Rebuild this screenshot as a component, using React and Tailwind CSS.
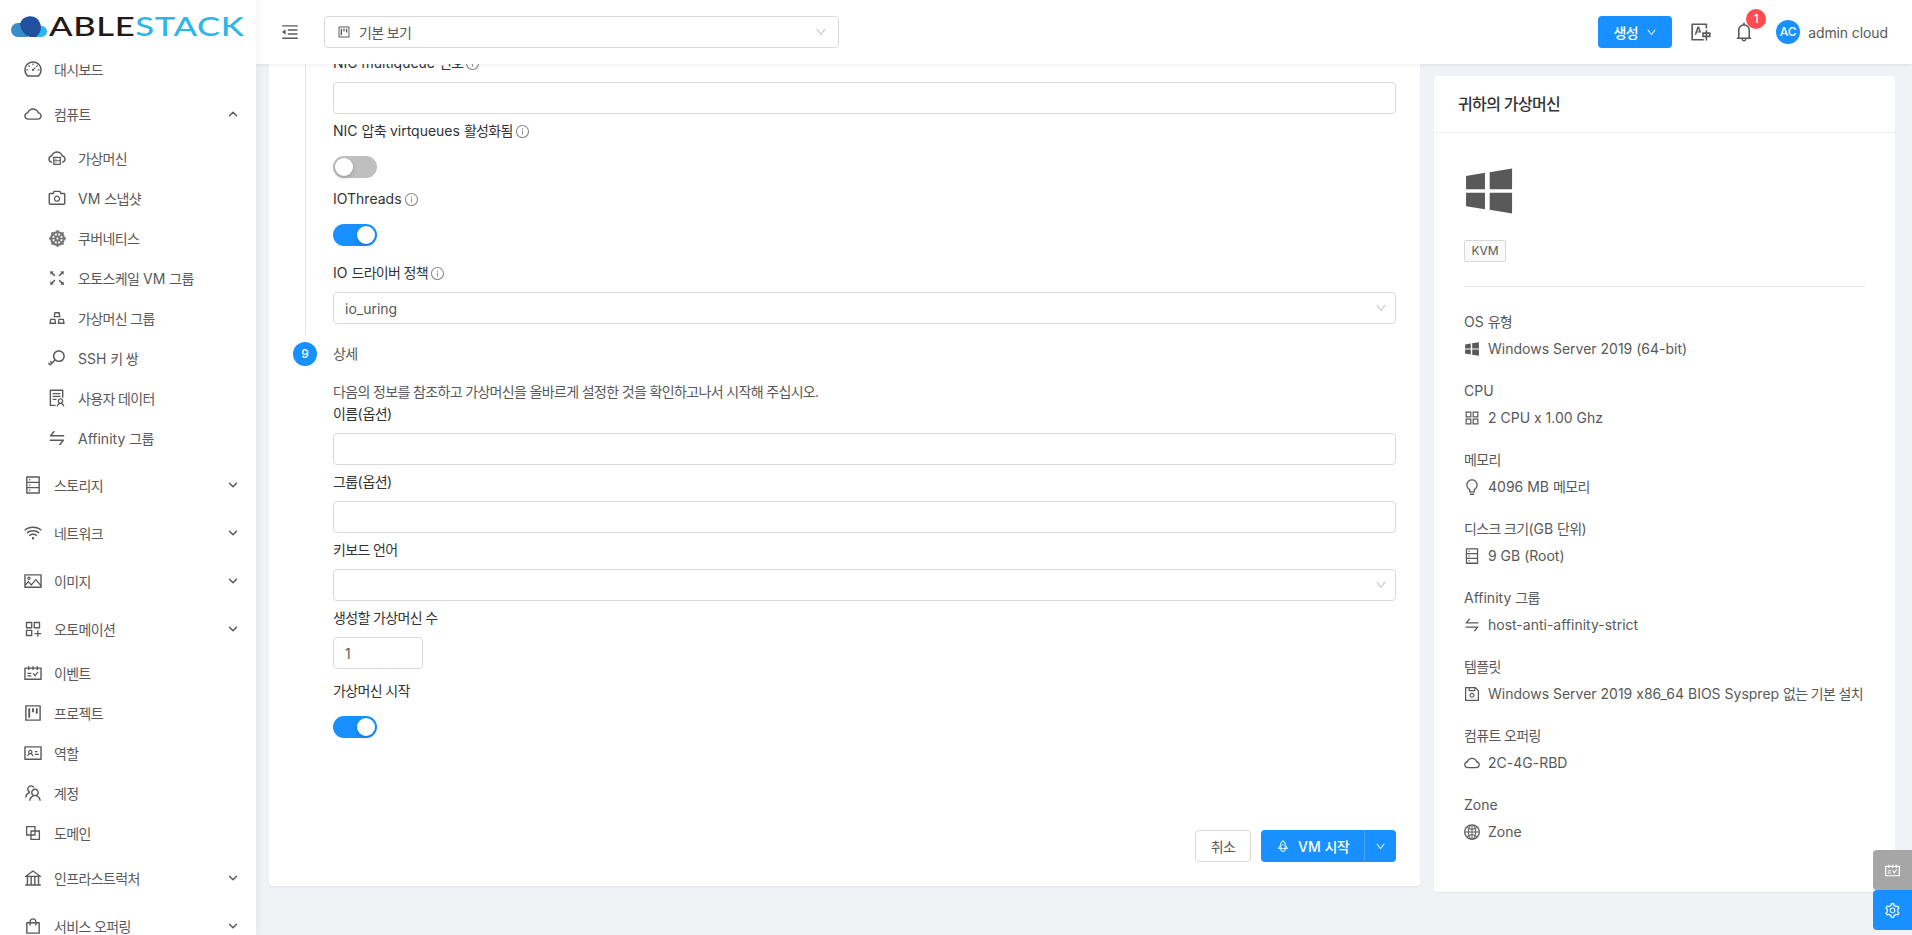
import {
  AiOutlineDashboard, AiOutlineCloud, AiOutlineCloudServer, AiOutlineCamera, AiOutlineFullscreen, AiOutlineGold,
  AiOutlineKey, AiOutlineSolution, AiOutlineSwap, AiOutlineDatabase, AiOutlineWifi, AiOutlinePicture,
  AiOutlineAppstoreAdd, AiOutlineSchedule, AiOutlineProject, AiOutlineIdcard, AiOutlineTeam, AiOutlineBlock,
  AiOutlineBank, AiOutlineShopping, AiOutlineMenuFold, AiOutlineDown, AiOutlineInfoCircle, AiFillWindows,
  AiOutlineAppstore, AiOutlineBulb, AiOutlineSave, AiOutlineGlobal, AiOutlineRocket, AiOutlineSetting,
  AiOutlineTranslation, AiOutlineBell,
} from 'react-icons/ai'
import { FaDharmachakra } from 'react-icons/fa'
import { ChevronDown, ChevronUp } from 'lucide-react'

const computeItems = [
  { label: '가상머신', icon: AiOutlineCloudServer },
  { label: 'VM 스냅샷', icon: AiOutlineCamera },
  { label: '쿠버네티스', icon: FaDharmachakra, size: 17, muted: true },
  { label: '오토스케일 VM 그룹', icon: AiOutlineFullscreen },
  { label: '가상머신 그룹', icon: AiOutlineGold },
  { label: 'SSH 키 쌍', icon: AiOutlineKey },
  { label: '사용자 데이터', icon: AiOutlineSolution },
  { label: 'Affinity 그룹', icon: AiOutlineSwap },
]

const lowerItems = [
  { label: '스토리지', icon: AiOutlineDatabase, sub: true },
  { label: '네트워크', icon: AiOutlineWifi, sub: true },
  { label: '이미지', icon: AiOutlinePicture, sub: true },
  { label: '오토메이션', icon: AiOutlineAppstoreAdd, sub: true, flip: true },
  { label: '이벤트', icon: AiOutlineSchedule },
  { label: '프로젝트', icon: AiOutlineProject },
  { label: '역할', icon: AiOutlineIdcard },
  { label: '계정', icon: AiOutlineTeam },
  { label: '도메인', icon: AiOutlineBlock },
  { label: '인프라스트럭처', icon: AiOutlineBank, sub: true, gap: true },
  { label: '서비스 오퍼링', icon: AiOutlineShopping, sub: true },
]

const summary = [
  { label: 'OS 유형', value: 'Windows Server 2019 (64-bit)', icon: AiFillWindows },
  { label: 'CPU', value: '2 CPU x 1.00 Ghz', icon: AiOutlineAppstore },
  { label: '메모리', value: '4096 MB 메모리', icon: AiOutlineBulb },
  { label: '디스크 크기(GB 단위)', value: '9 GB (Root)', icon: AiOutlineDatabase },
  { label: 'Affinity 그룹', value: 'host-anti-affinity-strict', icon: AiOutlineSwap },
  { label: '템플릿', value: 'Windows Server 2019 x86_64 BIOS Sysprep 없는 기본 설치', icon: AiOutlineSave },
  { label: '컴퓨트 오퍼링', value: '2C-4G-RBD', icon: AiOutlineCloud },
  { label: 'Zone', value: 'Zone', icon: AiOutlineGlobal },
]

// hangul in the reference runs narrower than Noto's, so tighten just those runs
function T({ children }) {
  return String(children).split(/([가-힣]+(?: [가-힣]+)*)/).map((part, i) =>
    /[가-힣]/.test(part)
      ? <span key={i} className="tracking-[-0.65px]">{part}</span>
      : part
  )
}

function Logo() {
  return (
    <div className="flex h-[49px] shrink-0 items-start pl-[11px] pt-[15px]">
      <svg width="37" height="22" viewBox="0 0 37 22" className="shrink-0">
        <path d="M7 22a7 7 0 0 1 0-14h10v14z" fill="#3b8ccb" />
        <path d="M30 22a5.5 5.5 0 0 0 1-11h-8v11z" fill="#2bb8e8" />
        <path d="M9 9a10.5 10.5 0 0 1 20-1c2 5 1 10-4 14h-6C13 20 10 15 9 9z" fill="#21509f" />
      </svg>
      <div className="ml-[1px] -mt-[2px] h-[26px] origin-left scale-x-[1.28] font-['Lato',sans-serif] text-[27px] leading-[26px] font-medium tracking-[0.5px] whitespace-nowrap">
        <span className="text-[#231815]">ABLE</span>
        <span className="text-[#2db7e4]">STACK</span>
      </div>
    </div>
  )
}

function MenuIcon({ item }) {
  const Icon = item.icon
  return (
    <span className={`flex w-5 shrink-0 justify-center ${item.muted ? 'text-[#737373]' : ''}`}>
      <Icon size={item.size || 20} className={item.flip ? '-scale-x-100' : ''} />
    </span>
  )
}

function MenuRow({ item, open }) {
  return (
    <div className={`flex shrink-0 items-center pl-[23px] pr-4 text-[14px] text-[#595959] ${item.sub ? 'h-12' : 'h-10'} ${item.gap ? 'mt-px' : ''}`}>
      <MenuIcon item={item} />
      <span className="ml-[11px] flex-1 whitespace-nowrap"><T>{item.label}</T></span>
      {item.sub && (open
        ? <ChevronUp size={14} strokeWidth={2.5} />
        : <ChevronDown size={14} strokeWidth={2.5} />)}
    </div>
  )
}

function Sidebar() {
  return (
    <aside className="z-20 flex h-full w-64 shrink-0 flex-col overflow-hidden bg-white shadow-[2px_0_8px_rgba(29,35,41,0.05)]">
      <Logo />
      <MenuRow item={{ label: '대시보드', icon: AiOutlineDashboard }} />
      <div className="mt-px shrink-0">
        <MenuRow item={{ label: '컴퓨트', icon: AiOutlineCloud, sub: true }} open />
      </div>
      {computeItems.map((item) => (
        <div key={item.label} className="flex h-10 shrink-0 items-center pl-[47px] text-[14px] text-[#595959]">
          <MenuIcon item={item} />
          <span className="ml-[11px] whitespace-nowrap"><T>{item.label}</T></span>
        </div>
      ))}
      <div className="h-[3px] shrink-0" />
      {lowerItems.map((item) => (
        <MenuRow key={item.label} item={item} />
      ))}
    </aside>
  )
}

function Header() {
  return (
    <header className="relative z-10 flex h-16 shrink-0 items-center bg-white pl-6 pr-6 text-[14px] shadow-[0_1px_4px_rgba(0,21,41,0.08)]">
      <AiOutlineMenuFold size={20} className="text-[#595959]" />
      <div className="ml-6 flex h-8 w-[515px] items-center rounded border border-[#d9d9d9] pl-3 pr-[11px] text-[#595959]">
        <AiOutlineProject size={14} />
        <span className="ml-2 flex-1"><T>기본 보기</T></span>
        <AiOutlineDown size={12} className="text-[#bfbfbf]" />
      </div>
      <div className="ml-auto flex items-center">
        <div className="flex h-8 w-[74px] items-center justify-center rounded bg-[#1890ff] font-medium text-white">
          <span><T>생성</T></span>
          <AiOutlineDown size={11} className="ml-2" />
        </div>
        <AiOutlineTranslation size={22} className="ml-[18px] text-[#595959]" />
        <div className="relative ml-[21px]">
          <AiOutlineBell size={22} className="text-[#595959]" />
          <span className="absolute -right-[11px] -top-[12px] flex h-5 w-5 items-center justify-center rounded-full bg-[#ff4d4f] text-[12px] font-medium text-white">1</span>
        </div>
        <div className="ml-[21px] flex h-6 w-6 items-center justify-center rounded-full bg-[#1890ff] text-[12px] font-medium text-white">AC</div>
        <span className="ml-2 tracking-[-0.1px] text-[#595959]">admin cloud</span>
      </div>
    </header>
  )
}

function Label({ children, info }) {
  return (
    <div className="flex h-[22px] items-center text-[14px] leading-[22px] text-[#333333]">
      <span><T>{children}</T></span>
      {info && <AiOutlineInfoCircle size={15} className="ml-[2px] text-[#8c8c8c]" />}
    </div>
  )
}

function Field({ label, info, value, select, narrow }) {
  return (
    <div className="mb-[6px]">
      <Label info={info}>{label}</Label>
      <div className={`mt-2 flex h-8 items-center rounded border border-[#d9d9d9] pl-[11px] pr-[8px] text-[14px] text-[#595959] ${narrow ? 'w-[90px]' : 'w-full'}`}>
        <span className="flex-1">{value}</span>
        {select && <AiOutlineDown size={12} className="text-[#bfbfbf]" />}
      </div>
    </div>
  )
}

function Toggle({ label, info, on, after }) {
  return (
    <div className={after}>
      <Label info={info}>{label}</Label>
      <div className={`mt-[14px] flex h-[22px] w-[44px] items-center rounded-full px-[2px] ${on ? 'justify-end bg-[#1890ff]' : 'bg-[#bfbfbf]'}`}>
        <div className="h-[18px] w-[18px] rounded-full bg-white shadow-[0_2px_4px_rgba(0,35,11,0.2)]" />
      </div>
    </div>
  )
}

function FormCard() {
  return (
    <section className="-mt-6 flex h-[834px] w-[1151px] shrink-0 flex-col rounded bg-white pl-6 pr-6 shadow-[0_1px_2px_rgba(0,0,0,0.06)]">
      <div className="flex">
        <div className="flex w-6 shrink-0 justify-center">
          <div className="w-px bg-[#e8e8e8]" />
        </div>
        <div className="ml-4 flex-1 pb-[6px]">
          <Field label="NIC multiqueue 번호" info />
          <Toggle label="NIC 압축 virtqueues 활성화됨" info after="mb-[10px]" />
          <Toggle label="IOThreads" info on after="mb-4" />
          <Field label="IO 드라이버 정책" info value="io_uring" select />
        </div>
      </div>
      <div className="flex pt-[6px]">
        <div className="flex h-6 w-6 shrink-0 items-center justify-center rounded-full bg-[#1890ff] text-[12px] font-medium text-white">9</div>
        <div className="ml-4 flex-1">
          <div className="h-6 text-[14px] leading-6 text-[#595959]"><T>상세</T></div>
          <div className="mt-[15px] h-[22px] text-[14px] leading-[22px] text-[#595959]">
            <T>다음의 정보를 참조하고 가상머신을 올바르게 설정한 것을 확인하고나서 시작해 주십시오.</T>
          </div>
          <Field label="이름(옵션)" />
          <Field label="그룹(옵션)" />
          <Field label="키보드 언어" select />
          <Field label="생성할 가상머신 수" value="1" narrow />
          <div className="mt-[11px]">
            <Toggle label="가상머신 시작" on />
          </div>
        </div>
      </div>
      <div className="mt-auto mb-6 flex justify-end text-[14px]">
        <div className="flex h-8 w-[56px] items-center justify-center rounded border border-[#d9d9d9] text-[#595959]"><T>취소</T></div>
        <div className="ml-[10px] flex h-8 w-[135px] items-center rounded bg-[#1890ff] font-medium text-white">
          <div className="flex flex-1 items-center justify-center">
            <AiOutlineRocket size={14} />
            <span className="ml-2"><T>VM 시작</T></span>
          </div>
          <div className="flex h-full w-8 items-center justify-center border-l border-[#46a6ff]">
            <AiOutlineDown size={11} />
          </div>
        </div>
      </div>
    </section>
  )
}

function SummaryCard() {
  return (
    <aside className="h-[816px] min-w-0 flex-1 rounded bg-white shadow-[0_1px_2px_rgba(0,0,0,0.06)]">
      <div className="flex h-[57px] items-center border-b border-[#f0f0f0] pl-6 text-[16px] font-medium text-[#333333]"><T>귀하의 가상머신</T></div>
      <div className="px-[30px] pt-[32px]">
        <AiFillWindows size={60} className="-ml-[5px] -my-1 text-[#595959]" />
        <div className="mt-[23px] flex h-[22px] w-[42px] items-center justify-center rounded-[2px] border border-[#d9d9d9] bg-[#fafafa] text-[12px] text-[#595959]">KVM</div>
        <div className="mt-6 h-px bg-[#e8e8e8]" />
        <div className="pt-6">
          {summary.map((row) => {
            const Icon = row.icon
            return (
              <div key={row.label} className="mb-5 text-[14px] leading-[22px] text-[#595959]">
                <div className="h-[22px]"><T>{row.label}</T></div>
                <div className="mt-[5px] flex h-[22px] items-center">
                  <Icon size={18} className="-ml-px shrink-0" />
                  <span className="ml-[7px] whitespace-nowrap"><T>{row.value}</T></span>
                </div>
              </div>
            )
          })}
        </div>
      </div>
    </aside>
  )
}

export default function App() {
  return (
    <div className="relative flex h-screen overflow-hidden bg-[#f0f2f5] font-[Inter,'Noto_Sans_CJK_KR',sans-serif] [font-feature-settings:'calt'_0]">
      <Sidebar />
      <main className="flex min-w-0 flex-1 flex-col">
        <Header />
        <div className="flex items-start gap-[14px] pl-[13px] pr-[17px] pt-3">
          <FormCard />
          <SummaryCard />
        </div>
      </main>
      <div className="absolute right-0 top-[850px] z-20 flex h-10 w-[39px] items-center justify-center rounded-l bg-[#a6a6a6] text-white">
        <AiOutlineSchedule size={17} />
      </div>
      <div className="absolute right-0 top-[890px] z-20 flex h-10 w-[39px] items-center justify-center rounded-l bg-[#1890ff] text-white">
        <AiOutlineSetting size={17} />
      </div>
    </div>
  )
}
